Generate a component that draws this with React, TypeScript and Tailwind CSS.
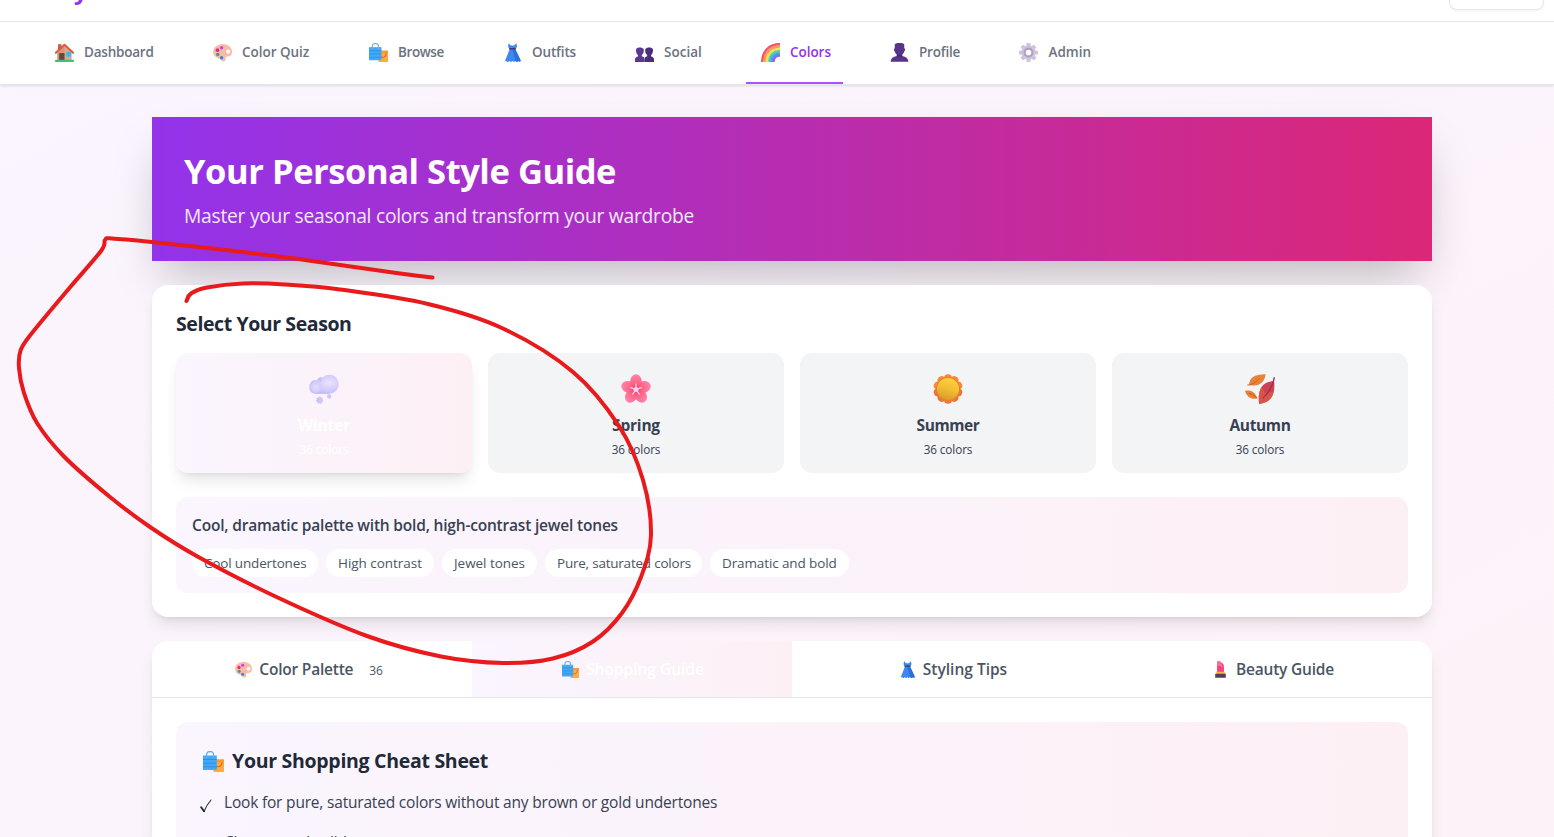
import React from "react";

type IconProps = { className?: string };

function House({ className }: IconProps) {
  return (
    <svg viewBox="0 0 32 32" className={className}>
      <path d="M5 2h6v10H5z" fill="#b5674f" />
      <path d="M4 15L16 4l12 11v14H4z" fill="#dba98a" />
      <path d="M4 15L16 4v25H4z" fill="#d29b76" />
      <path d="M7 17h9v12H7z" fill="#6b4444" />
      <path d="M19 15h8v8h-8z" fill="#3fb4f4" />
      <path d="M1.500 16.500L16 3l14.500 13.500" fill="none" stroke="#e8573f" strokeWidth="3.600" strokeLinecap="round" strokeLinejoin="round" />
      <rect x="0" y="28" width="32" height="4" rx="1.500" fill="#3fc07a" />
    </svg>
  );
}

function Palette({ className }: IconProps) {
  return (
    <svg viewBox="0 0 32 32" className={className}>
      <path
        d="M14 2C23 1 31.500 6 32 14c.3 6-3 8.500-7.500 8.800-3 .2-4 1.200-3.500 4 .5 3-1.500 4.700-4.500 4.200C14 30.500 13.500 28 11 26.500 7 25 1 23 .3 16 0 8.500 6 3 14 2z"
        fill="#fdb9a6"
      />
      <circle cx="25.500" cy="14.500" r="3.600" fill="#fff" />
      <circle cx="14.500" cy="8" r="3" fill="#b44cf0" />
      <circle cx="7.500" cy="12" r="3" fill="#e6277e" />
      <circle cx="8" cy="19.500" r="2.900" fill="#2ba79b" />
      <circle cx="14.500" cy="25" r="2.900" fill="#2f87ee" />
    </svg>
  );
}

function Bags({ className }: IconProps) {
  return (
    <svg viewBox="0 0 32 32" className={className}>
      <path d="M16 13h16v19H16z" fill="#ffab40" />
      <path d="M16 13h16v4H16z" fill="#fb9a2c" />
      <path d="M29 17c0 7-5 8-9 6" fill="none" stroke="#d8632b" strokeWidth="1.800" />
      <path d="M0 7h21v22H0z" fill="#43a9f7" />
      <path d="M0 13h21M0 18.500h21M0 24h21" stroke="#2f8ce6" strokeWidth="1.400" />
      <path d="M5.500 11V5.500C5.500-.8 16-.8 16 5.500V11" fill="none" stroke="#5fb2ee" strokeWidth="1.900" />
    </svg>
  );
}

function Dress({ className }: IconProps) {
  return (
    <svg viewBox="0 0 32 32" className={className}>
      <path d="M9.500 0L12 3.500l4 1 4-1L22.500 0l1 6-2.500 5 9 19-2 1.500-2-1-2.500 1.500-2.500-1.500-2.500 1.500-2.500-1.500-2.500 1.500-2.500-1.500-2.500 1.500-2.500-1-2.500-1L11 11 8.500 6z" fill="#3c88ee" />
      <path d="M16 11l5 0 9 19-2 1.500-2-1-2.500 1.500-2.500-1.500z" fill="#2b70dc" />
      <path d="M10.500 8.500h11V11h-11z" fill="#43356e" />
    </svg>
  );
}

function People({ className }: IconProps) {
  return (
    <svg viewBox="0 0 32 32" className={className}>
      <path d="M2 10C3 6.500 13 6.500 14.500 10c1 3 .2 8-3 10.300v2c3 .7 4.500 2 4.500 5.200V32H0v-4.500c0-3 2-4 5-4.700v-2.500C2.200 18.500 1 13 2 10z" fill="#5b3791" />
      <path d="M17.500 10C19 6.500 29 6.500 30 10c1 3-.2 8.500-3 10.300v2.500c3 .7 5 1.700 5 4.700V32H16v-4.500c0-3.200 1.500-4.500 4.500-5.200v-2c-3.200-2.300-4-7.300-3-10.300z" fill="#4b2c7a" />
    </svg>
  );
}

function Rainbow({ className }: IconProps) {
  return (
    <svg viewBox="0 0 32 32" className={className} fill="none" strokeWidth="4.200">
      <path d="M2 32C2 14 14 2 32 2" stroke="#f4526f" />
      <path d="M6 32C6 17 17 6 32 6" stroke="#ff9a4a" />
      <path d="M10 32c0-13 9-22 22-22" stroke="#ffdb5c" />
      <path d="M14 32c0-11 7-18 18-18" stroke="#4fd3a0" />
      <path d="M17.500 32c0-9 5.500-14.500 14.500-14.500" stroke="#3fa2f5" />
      <path d="M21 32c0-7 4-11 11-11" stroke="#9464e8" />
    </svg>
  );
}

function Person({ className }: IconProps) {
  return (
    <svg viewBox="0 0 32 32" className={className}>
      <path d="M8 2.500C10-.8 22-.8 24 2.500v6.500c1.800.5 1.800 4 0 4.800-.6 2.800-2 4.500-3.500 5.800V22C27 23 30.500 26 31 31.500H1C1.500 26 5 23 11.500 22v-2.400C10 18.300 8.600 16.600 8 13.800c-1.800-.8-1.800-4.300 0-4.800z" fill="#573489" />
      <path d="M11.500 19.600c3 1.700 6 1.700 9 0V22c-3 1.500-6 1.500-9 0z" fill="#3d2263" />
    </svg>
  );
}

function Gear({ className }: IconProps) {
  return (
    <svg viewBox="0 0 32 32" className={className}>
      <g fill="#cfc3dd">
        <rect x="12.500" y="0" width="7" height="32" rx="2" />
        <rect x="12.500" y="0" width="7" height="32" rx="2" transform="rotate(45 16 16)" />
        <rect x="12.500" y="0" width="7" height="32" rx="2" transform="rotate(90 16 16)" />
        <rect x="12.500" y="0" width="7" height="32" rx="2" transform="rotate(135 16 16)" />
        <circle cx="16" cy="16" r="12" />
      </g>
      <circle cx="16" cy="16" r="6.500" fill="#fff" stroke="#aba0bd" strokeWidth="3.500" />
    </svg>
  );
}

function SnowCloud({ className }: IconProps) {
  return (
    <svg viewBox="0 0 32 32" className={className}>
      <defs>
        <radialGradient id="puff" cx=".68" cy=".42" r=".6">
          <stop offset="0" stopColor="#ece2fd" />
          <stop offset=".5" stopColor="#d9d1fb" />
          <stop offset="1" stopColor="#c5c0fb" />
        </radialGradient>
        <radialGradient id="puffSmall">
          <stop offset="0" stopColor="#e4dcfc" />
          <stop offset="1" stopColor="#d2cbfb" />
        </radialGradient>
      </defs>
      <circle cx="13" cy="8.500" r="5" fill="#c2c0fb" />
      <path d="M7 6.500c2.500 0 4 .8 5.500 2.500C13 4 17 .8 22 .8c5.500 0 9.700 4.500 9.700 10S27 21 21 21H7.500C3 21 .3 18 .3 14S3 6.500 7 6.500z" fill="url(#puff)" />
      <circle cx="7.500" cy="14" r="6" fill="url(#puffSmall)" />
      <path d="M7 20.500h15" stroke="#c1bafa" strokeWidth="1" />
      <circle cx="11.300" cy="28" r="3.200" fill="#cdc5f8" stroke="#cdc5f8" strokeDasharray="1.500 1.300" strokeWidth="1.500" />
      <circle cx="21.500" cy="24" r="2.300" fill="#cdc5fa" />
    </svg>
  );
}

function Blossom({ className }: IconProps) {
  return (
    <svg viewBox="0 0 32 32" className={className}>
      <defs>
        <radialGradient id="petal" gradientUnits="userSpaceOnUse" cx="16" cy="17" r="16">
          <stop offset="0" stopColor="#f8375f" />
          <stop offset=".5" stopColor="#ff6685" />
          <stop offset="1" stopColor="#ff82ae" />
        </radialGradient>
      </defs>
      <g fill="url(#petal)">
        <ellipse cx="16" cy="8" rx="6.200" ry="7.700" />
        <ellipse cx="16" cy="8" rx="6.200" ry="7.700" transform="rotate(72 16 16.500)" />
        <ellipse cx="16" cy="8" rx="6.200" ry="7.700" transform="rotate(144 16 16.500)" />
        <ellipse cx="16" cy="8" rx="6.200" ry="7.700" transform="rotate(216 16 16.500)" />
        <ellipse cx="16" cy="8" rx="6.200" ry="7.700" transform="rotate(288 16 16.500)" />
      </g>
      <path d="M16 16.500V10.500M16 16.500l5.700-1.900M16 16.500l3.500 5M16 16.500l-3.500 5M16 16.500l-5.700-1.900" stroke="#f6d3f7" strokeWidth="1.300" strokeLinecap="round" />
      <circle cx="16" cy="16.500" r="2.700" fill="#ecd0fa" />
    </svg>
  );
}

function SunFlower({ className }: IconProps) {
  const angles = [0, 36, 72, 108, 144, 180, 216, 252, 288, 324];
  return (
    <svg viewBox="0 0 32 32" className={className}>
      <defs>
        <linearGradient id="disc" x1=".7" y1="0" x2=".4" y2="1">
          <stop offset="0" stopColor="#ffd23c" />
          <stop offset=".5" stopColor="#f3bd33" />
          <stop offset="1" stopColor="#d59a2c" />
        </linearGradient>
      </defs>
      {angles.map((a) => (
        <circle key={a} cx="16" cy="4.500" r="4.300" fill={a > 90 && a < 270 ? "#ec7434" : "#f58a36"} transform={`rotate(${a} 16 16)`} />
      ))}
      <circle cx="16" cy="16" r="12.800" fill="#ee7c2e" />
      <circle cx="16" cy="16" r="11.800" fill="url(#disc)" />
    </svg>
  );
}

function Leaves({ className }: IconProps) {
  return (
    <svg viewBox="0 0 32 32" className={className}>
      <path d="M4.500 12C4 4 11 0 22 .3 21 9 15 13.500 6.500 12z" fill="#e58436" />
      <path d="M2.500 11.800c5 0 9-3 13-7" fill="none" stroke="#c25c2e" strokeWidth="1" />
      <path d="M0 18c6-1.500 11 1 13 8-7 1.500-11-2-13-8z" fill="#e88334" />
      <path d="M4 20.500c4 1 6 3 9 5" fill="none" stroke="#c05a2e" strokeWidth="1" />
      <path d="M31 7.500c1.500 13-2 23-16 24.500C13.500 18 17 8 31 7.500z" fill="#c94350" />
      <path d="M15 32c-.8-8-.3-14 3-18.500L21 20l9.500-1C29 26 24.500 31 15 32z" fill="#dc5a42" opacity=".8" />
      <path d="M19 26C26 19 30 13 31.300 3.500" fill="none" stroke="#a62b55" strokeWidth="1.500" />
    </svg>
  );
}

function Lipstick({ className }: IconProps) {
  return (
    <svg viewBox="0 0 32 32" className={className}>
      <path d="M9.500 21V3.500C9.500 .5 13 0 15.500 1.500c4 2 7 5 7 8V21z" fill="#f8427f" />
      <path d="M9.500 8V3.500C9.500 .5 13 0 15.500 1.500L22 12z" fill="#ff6d92" />
      <path d="M8 20h16v5H8z" fill="#fbb33c" />
      <path d="M6 24h20v7.500H6z" fill="#4e3f5e" />
    </svg>
  );
}

const NAV = [
  { icon: House, label: "Dashboard", w: "w-[126px]", t: "tracking-[-0.22px]" },
  { icon: Palette, label: "Color Quiz", w: "w-[124px]", t: "tracking-[-0.03px]" },
  { icon: Bags, label: "Browse", w: "w-[102px]", t: "tracking-[-0.42px]" },
  { icon: Dress, label: "Outfits", w: "w-[100px]", t: "tracking-[-0.16px]" },
  { icon: People, label: "Social", w: "w-[94px]", t: "tracking-[0.02px]" },
  { icon: Rainbow, label: "Colors", w: "w-[97px]", t: "tracking-[-0.05px]", active: true },
  { icon: Person, label: "Profile", w: "w-[97.500px]", t: "tracking-[-0.2px]" },
  { icon: Gear, label: "Admin", w: "w-[99px]", t: "tracking-[0px]" },
];

const SEASONS = [
  { icon: SnowCloud, name: "Winter", t: "tracking-[-0.1px]", active: true },
  { icon: Blossom, name: "Spring", t: "tracking-[-0.2px]" },
  { icon: SunFlower, name: "Summer", t: "tracking-[-0.4px]" },
  { icon: Leaves, name: "Autumn", t: "tracking-[-0.36px]" },
];

const TRAITS = [
  { label: "Cool undertones", w: "w-[126px]", t: "tracking-[-0.16px]" },
  { label: "High contrast", w: "w-[108px]", t: "tracking-[-0.04px]" },
  { label: "Jewel tones", w: "w-[95px]", t: "tracking-[-0.04px]" },
  { label: "Pure, saturated colors", w: "w-[157px]", t: "tracking-[-0.22px]" },
  { label: "Dramatic and bold", w: "w-[139px]", t: "tracking-[-0.12px]" },
];

const TABS = [
  { icon: Palette, label: "Color Palette", count: 36, t: "tracking-[-0.21px]" },
  { icon: Bags, label: "Shopping Guide", active: true, t: "tracking-[0px]" },
  { icon: Dress, label: "Styling Tips", t: "tracking-[0px]" },
  { icon: Lipstick, label: "Beauty Guide", t: "tracking-[-0.2px]" },
];

const TIPS = ["Look for pure, saturated colors without any brown or gold undertones", "Choose cool solid"];

const STROKE: [number, number][] = [
  [432.5, 277.5], [400, 273.5], [298, 259], [225, 250], [151.5, 242], [112, 238.5], [105, 240], [101, 251],
  [69, 288.5], [32, 333], [20.7, 350], [19, 368], [24, 393], [37, 423], [64, 456.5], [110, 497], [151.5, 528],
  [197.5, 556.5], [275.5, 596.5], [367, 636], [441, 656.5], [503, 663], [553, 658.5], [593, 641.5], [622, 613], [641, 577],
  [651, 535], [643, 480], [619, 426], [573, 372], [503, 328.500], [428, 304], [340, 289.5],
  [285, 284.500], [243, 283.5], [207, 287.5], [191, 293.5], [186.5, 301],
];

function smoothPath(p: [number, number][]) {
  let d = `M${p[0][0]} ${p[0][1]}`;
  for (let i = 0; i < p.length - 1; i++) {
    const a = p[Math.max(i - 1, 0)];
    const b = p[i];
    const c = p[i + 1];
    const e = p[Math.min(i + 2, p.length - 1)];
    d += `C${b[0] + (c[0] - a[0]) / 6} ${b[1] + (c[1] - a[1]) / 6} ${c[0] - (e[0] - b[0]) / 6} ${c[1] - (e[1] - b[1]) / 6} ${c[0]} ${c[1]}`;
  }
  return d;
}

export default function App() {
  return (
    <div className="relative h-[837px] w-[1554px] overflow-hidden bg-linear-to-br/srgb from-[#faf5ff] to-[#fdf2f8] font-['Open_Sans','Noto_Sans',sans-serif] text-[#1f2937]">
      <div className="relative bg-white shadow-[0_1px_3px_rgba(0,0,0,0.08),0_1px_2px_rgba(0,0,0,0.04)]">
        <header className="flex h-[22px] items-end justify-between overflow-hidden border-b border-[#e5e7eb] pr-[10px] pl-[74px]">
          <span className="mb-[15px] text-2xl leading-8 font-bold text-[#9333ea]">y</span>
          <div className="mb-[11px] h-9 w-[95px] rounded-lg border border-[#e5e7eb] bg-white shadow-[0_1px_2px_rgba(0,0,0,0.05)]" />
        </header>
        <nav className="flex h-[63px] gap-8 border-b border-[#e5e7eb] pl-10">
          {NAV.map(({ icon: Icon, label, w, t, active }) => (
            <a
              key={label}
              className={`flex h-[62px] shrink-0 items-center gap-2 border-b-2 pl-3 text-[13.5px] font-semibold whitespace-nowrap ${w} ${t} ${
                active ? "border-[#a855f7] text-[#9333ea]" : "border-transparent text-[#6b7280]"
              }`}
            >
              <span className="flex w-6 justify-center pt-[1px]">
                <Icon className="size-[19px]" />
              </span>
              <span className="leading-5">{label}</span>
            </a>
          ))}
        </nav>
      </div>

      <main className="mx-auto flex w-[1280px] translate-x-[15px] flex-col gap-6 pt-8">
        <section className="h-36 bg-linear-to-r/srgb from-[#9333ea] to-[#db2777] p-8 text-white shadow-[0_25px_50px_-12px_rgba(0,0,0,0.25)]">
          <h1 className="mb-3 pt-[3px] text-[34.5px] leading-[38px] font-bold tracking-[-0.45px]">Your Personal Style Guide</h1>
          <p className="text-[19.25px] leading-7 tracking-[-0.26px] text-[#f3e8ff]">Master your seasonal colors and transform your wardrobe</p>
        </section>

        <section className="rounded-2xl bg-white p-6 shadow-[0_10px_15px_-3px_rgba(0,0,0,0.1),0_4px_6px_-4px_rgba(0,0,0,0.1)]">
          <h2 className="mb-[15px] pt-px text-[19.5px] leading-7 font-bold tracking-[-0.41px]">Select Your Season</h2>
          <div className="grid grid-cols-4 gap-4">
            {SEASONS.map(({ icon: Icon, name, t, active }) => (
              <button
                key={name}
                className={`flex h-[120px] flex-col items-center rounded-xl py-4 ${
                  active
                    ? "bg-linear-to-r/srgb from-[#faf5ff] to-[#fdf0f5] text-white shadow-[0_10px_15px_-3px_rgba(0,0,0,0.1),0_4px_6px_-4px_rgba(0,0,0,0.1)]"
                    : "bg-[#f3f4f6] text-[#374151]"
                }`}
              >
                <span className="mb-1 flex h-10 items-center">
                  <Icon className="size-[30px]" />
                </span>
                <span className={`mb-1 text-[15.5px] leading-6 font-bold ${t}`}>{name}</span>
                <span className="text-[11.75px] leading-4 tracking-[-0.1px]">36 colors</span>
              </button>
            ))}
          </div>
          <div className="mt-6 rounded-xl bg-linear-to-r/srgb from-[#faf5ff] to-[#fdf0f5] p-4">
            <p className="mb-3 text-[15.5px] leading-6 font-semibold tracking-[-0.19px] text-[#374151]">
              Cool, dramatic palette with bold, high-contrast jewel tones
            </p>
            <div className="flex gap-2">
              {TRAITS.map(({ label, w, t }) => (
                <span key={label} className={`h-7 rounded-full bg-white px-3 text-[13.5px] leading-7 whitespace-nowrap text-[#4b5563] ${w} ${t}`}>
                  {label}
                </span>
              ))}
            </div>
          </div>
        </section>

        <section className="overflow-hidden rounded-2xl bg-white shadow-[0_10px_15px_-3px_rgba(0,0,0,0.1),0_4px_6px_-4px_rgba(0,0,0,0.1)]">
          <div className="grid grid-cols-4 border-b border-[#e5e7eb]">
            {TABS.map(({ icon: Icon, label, count, t, active }) => (
              <button
                key={label}
                className={`flex h-14 items-center justify-center text-[15.5px] font-semibold ${t} ${
                  active ? "bg-linear-to-r/srgb from-[#faf5ff] to-[#fdf0f5] text-white" : "text-[#4b5563]"
                }`}
              >
                <span className="mr-[5px] flex w-[21px] justify-center">
                  <Icon className="size-[17px]" />
                </span>
                <span className="leading-6">{label}</span>
                {count !== undefined && <span className="ml-2 px-2 pt-[3px] text-[12px] font-normal">{count}</span>}
              </button>
            ))}
          </div>
          <div className="p-6">
            <div className="rounded-xl bg-linear-to-r/srgb from-[#faf5ff] to-[#fdf0f5] p-6">
              <h3 className="mb-[15px] flex items-center pt-px text-[19.5px] leading-7 font-bold tracking-[-0.29px]">
                <span className="mr-[6px] flex w-[26px] justify-center">
                  <Bags className="size-[21px]" />
                </span>
                Your Shopping Cheat Sheet
              </h3>
              <ul className="flex flex-col gap-4">
                {TIPS.map((tip) => (
                  <li key={tip} className="flex text-[15.5px] leading-6 tracking-[-0.19px] text-[#374151]">
                    <svg viewBox="0 0 12 14" className="mt-[9px] mr-3 h-[14px] w-3 shrink-0" fill="none">
                      <path d="M1.200 8.300L4 12.300" stroke="#1f2937" strokeWidth="1.900" strokeLinecap="round" />
                      <path d="M4 12.500C5.500 8.500 8 4.500 11 1" stroke="#1f2937" strokeWidth="1.100" strokeLinecap="round" />
                    </svg>
                    {tip}
                  </li>
                ))}
              </ul>
            </div>
          </div>
        </section>
      </main>

      <svg viewBox="0 0 1554 837" className="pointer-events-none absolute inset-0 h-full w-full" fill="none">
        <path d={smoothPath(STROKE)} stroke="#e81a1c" strokeWidth="4" strokeLinecap="round" strokeLinejoin="round" />
      </svg>
    </div>
  );
}
